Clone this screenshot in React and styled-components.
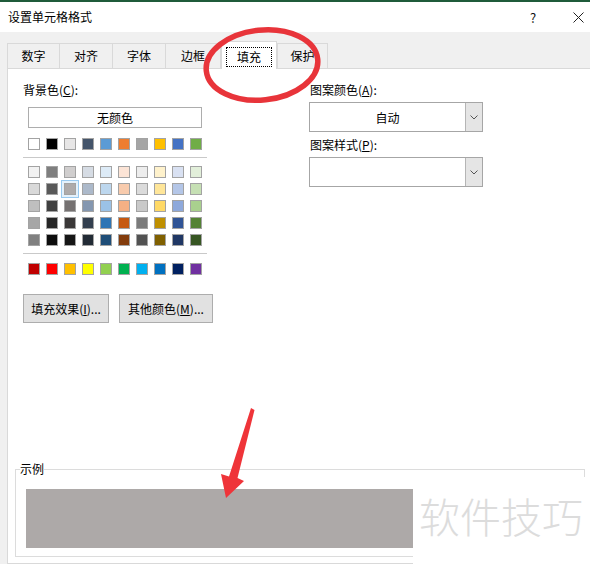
import React from 'react';
import styled, { createGlobalStyle } from 'styled-components';

const FONT = `"Noto Sans CJK SC", "Noto Sans", sans-serif`;

const GlobalStyle = createGlobalStyle`
  html, body { margin: 0; padding: 0; background: #f0f0f0; }
  body { font-family: ${FONT}; }
`;

const Window = styled.div`
  position: relative;
  width: 590px;
  height: 564px;
  overflow: hidden;
  background: #f0f0f0;
  display: flex;
  flex-direction: column;
  font-family: ${FONT};
  font-size: 12px;
  color: #000;
`;

const TopStripe = styled.div`
  flex: none;
  height: 2px;
  background: #1f5b3a;
`;

const TitleBar = styled.div`
  flex: none;
  height: 30px;
  background: #fff;
  display: flex;
  align-items: center;
  padding-left: 8px;
`;

const Title = styled.div`
  flex: 1;
  font-size: 12px;
  line-height: 16px;
`;

const TitleButton = styled.div`
  width: 20px;
  height: 20px;
  display: flex;
  align-items: center;
  justify-content: center;
  margin-right: ${(p) => p.$mr}px;
  font-size: 13px;
  color: #111;
`;

const Body = styled.div`
  flex: 1;
  display: flex;
  flex-direction: column;
  padding-left: 7px;
`;

const TabRow = styled.div`
  flex: none;
  margin-top: 9px;
  height: 27px;
  display: flex;
  align-items: flex-end;
  position: relative;
  z-index: 1;
`;

const Tab = styled.div`
  box-sizing: border-box;
  width: ${(p) => p.$w}px;
  height: ${(p) => (p.$active ? 28 : 25)}px;
  margin-left: ${(p) => p.$ml}px;
  margin-bottom: ${(p) => (p.$active ? -1 : 0)}px;
  border: 1px solid #d9d9d9;
  border-bottom: none;
  background: ${(p) => (p.$active ? '#fff' : '#f0f0f0')};
  display: flex;
  align-items: center;
  justify-content: center;
  font-size: 12px;
  line-height: 16px;
  position: relative;
  z-index: ${(p) => (p.$active ? 2 : 0)};
`;

const FocusText = styled.span`
  display: flex;
  align-items: center;
  justify-content: center;
  width: 46px;
  height: 20px;
  box-sizing: border-box;
  border: 1px dotted #000;
  margin-top: 2px;
`;

const Panel = styled.div`
  flex: 1;
  background: #fff;
  border: 1px solid #d9d9d9;
  border-right: none;
  padding-top: 13px;
  display: flex;
  flex-direction: column;
`;

const TopRow = styled.div`
  display: flex;
  padding-left: 15px;
`;

const LeftCol = styled.div`
  width: 286px;
  display: flex;
  flex-direction: column;
  align-items: flex-start;
`;

const RightCol = styled.div`
  width: 174px;
  display: flex;
  flex-direction: column;
`;

const Label = styled.div`
  font-size: 12px;
  line-height: 16px;
  margin-top: ${(p) => p.$mt || 0}px;
  padding-left: ${(p) => p.$pl || 0}px;
  u { text-underline-offset: 1px; }
`;

const NoColorButton = styled.div`
  box-sizing: border-box;
  margin: 9px 0 0 5px;
  width: 174px;
  height: 21px;
  border: 1px solid #adadad;
  background: #fff;
  display: flex;
  align-items: center;
  justify-content: center;
  font-size: 12px;
`;

const SwatchGrid = styled.div`
  display: grid;
  grid-template-columns: repeat(10, 12px);
  column-gap: 6px;
  row-gap: 5px;
  margin: ${(p) => p.$mt}px 0 0 5px;
`;

const Swatch = styled.div`
  box-sizing: border-box;
  width: 12px;
  height: 12px;
  border: 1px solid #a3a3a3;
  background: ${(p) => p.$c};
  box-shadow: ${(p) => (p.$selected ? '0 0 0 2px #e5f1fb, 0 0 0 3px #99c9ef' : 'none')};
`;

const Separator = styled.div`
  width: 184px;
  height: 1px;
  background: #c9c9c9;
  margin-top: 7px;
`;

const ButtonRow = styled.div`
  display: flex;
  gap: 10px;
  margin-top: 19px;
`;

const PushButton = styled.div`
  box-sizing: border-box;
  width: ${(p) => p.$w}px;
  height: 29px;
  border: 1px solid #adadad;
  background: #e1e1e1;
  display: flex;
  align-items: center;
  justify-content: center;
  font-size: 12px;
  u { text-underline-offset: 1px; }
`;

const Combo = styled.div`
  box-sizing: border-box;
  margin-top: 4px;
  width: 174px;
  height: 30px;
  border: 1px solid #a6a6a6;
  background: #fff;
  display: flex;
`;

const ComboValue = styled.div`
  flex: 1;
  display: flex;
  align-items: center;
  justify-content: center;
  font-size: 12px;
`;

const ComboArrow = styled.div`
  width: 16px;
  background: #e5e5e5;
  border-left: 1px solid #b5b5b5;
  display: flex;
  align-items: center;
  justify-content: center;
`;

const SampleGroup = styled.fieldset`
  box-sizing: border-box;
  width: 570px;
  margin: 139px 0 0 7px;
  padding: 13px 0 8px 4px;
  border: 1px solid #dcdcdc;
  min-inline-size: 0;
`;

const SampleLegend = styled.legend`
  padding: 0;
  margin: 0;
  font-size: 12px;
  line-height: 14px;
`;

const SampleFill = styled.div`
  width: 387px;
  height: 59px;
  margin-left: 6px;
  background: ${(p) => p.$c};
`;

const Watermark = styled.div`
  position: absolute;
  left: 413px;
  top: 477px;
  width: 177px;
  height: 87px;
  background: #fff;
  box-sizing: border-box;
  padding: 18px 0 0 6px;
  font-size: 41px;
  line-height: 41px;
  font-weight: 300;
  color: #dcdcdc;
  white-space: nowrap;
  z-index: 3;
`;

const Annotation = styled.svg`
  position: absolute;
  left: 0;
  top: 0;
  pointer-events: none;
  z-index: 10;
`;

const themeRow = ['#FFFFFF', '#000000', '#E7E6E6', '#44546A', '#5B9BD5', '#ED7D31', '#A5A5A5', '#FFC000', '#4472C4', '#70AD47'];
const tints = [
  ['#F2F2F2', '#7F7F7F', '#D0CECE', '#D6DCE4', '#DDEBF7', '#FCE4D6', '#EDEDED', '#FFF2CC', '#D9E1F2', '#E2EFDA'],
  ['#D9D9D9', '#595959', '#AEAAAA', '#ACB9CA', '#BDD7EE', '#F8CBAD', '#DBDBDB', '#FFE699', '#B4C6E7', '#C6E0B4'],
  ['#BFBFBF', '#404040', '#757171', '#8497B0', '#9BC2E6', '#F4B084', '#C9C9C9', '#FFD966', '#8EA9DB', '#A9D08E'],
  ['#A6A6A6', '#262626', '#3A3838', '#333F4F', '#2F75B5', '#C65911', '#7B7B7B', '#BF8F00', '#305496', '#548235'],
  ['#808080', '#0D0D0D', '#161616', '#222B35', '#1F4E78', '#833C0C', '#525252', '#806000', '#203764', '#375623'],
];
const standard = ['#C00000', '#FF0000', '#FFC000', '#FFFF00', '#92D050', '#00B050', '#00B0F0', '#0070C0', '#002060', '#7030A0'];

const tabs = [
  { t: '数字', w: 53, ml: 0 },
  { t: '对齐', w: 54, ml: -1 },
  { t: '字体', w: 54, ml: -1 },
  { t: '边框', w: 56, ml: -1 },
  { t: '填充', w: 56, ml: 0, active: true },
  { t: '保护', w: 51, ml: 0 },
];

const Chevron = () => (
  <svg width="8" height="5" viewBox="0 0 8 5">
    <path d="M0.5 0.5 L4 4 L7.5 0.5" fill="none" stroke="#555" strokeWidth="1" />
  </svg>
);

export default function App() {
  return (
    <>
      <GlobalStyle />
      <Window>
        <TopStripe />
        <TitleBar>
          <Title>设置单元格格式</Title>
          <TitleButton $mr={25}>?</TitleButton>
          <TitleButton $mr={2}>
            <svg width="11" height="11" viewBox="0 0 11 11">
              <path d="M0.5 0.5 L10.5 10.5 M10.5 0.5 L0.5 10.5" stroke="#222" strokeWidth="1" />
            </svg>
          </TitleButton>
        </TitleBar>
        <Body>
          <TabRow>
            {tabs.map((tb) => (
              <Tab key={tb.t} $w={tb.w} $ml={tb.ml} $active={tb.active}>
                {tb.active ? <FocusText>{tb.t}</FocusText> : tb.t}
              </Tab>
            ))}
          </TabRow>
          <Panel>
            <TopRow>
              <LeftCol>
                <Label>背景色(<u>C</u>):</Label>
                <NoColorButton>无颜色</NoColorButton>
                <SwatchGrid $mt={10}>
                  {themeRow.map((c, i) => <Swatch key={i} $c={c} />)}
                </SwatchGrid>
                <Separator />
                <SwatchGrid $mt={8}>
                  {tints.flatMap((row, r) =>
                    row.map((c, i) => <Swatch key={`${r}-${i}`} $c={c} $selected={r === 1 && i === 2} />)
                  )}
                </SwatchGrid>
                <Separator />
                <SwatchGrid $mt={9}>
                  {standard.map((c, i) => <Swatch key={i} $c={c} />)}
                </SwatchGrid>
                <ButtonRow>
                  <PushButton $w={86}>填充效果(<u>I</u>)...</PushButton>
                  <PushButton $w={94}>其他颜色(<u>M</u>)...</PushButton>
                </ButtonRow>
              </LeftCol>
              <RightCol>
                <Label $pl={1}>图案颜色(<u>A</u>):</Label>
                <Combo>
                  <ComboValue>自动</ComboValue>
                  <ComboArrow><Chevron /></ComboArrow>
                </Combo>
                <Label $pl={1} $mt={5}>图案样式(<u>P</u>):</Label>
                <Combo>
                  <ComboValue />
                  <ComboArrow><Chevron /></ComboArrow>
                </Combo>
              </RightCol>
            </TopRow>
            <SampleGroup>
              <SampleLegend>示例</SampleLegend>
              <SampleFill $c="#ADA9A8" />
            </SampleGroup>
          </Panel>
        </Body>
        <Watermark>软件技巧</Watermark>
        <Annotation width="590" height="564" viewBox="0 0 590 564">
          <ellipse cx="262" cy="65" rx="56" ry="35" fill="none" stroke="#e8343a" strokeWidth="5.5" transform="rotate(-6 262 65)" />
          <path d="M251 408 L254.5 410 L237.5 478 L244 481 L226 498 L221 474 L229 476.5 Z" fill="#ef3439" />
        </Annotation>
      </Window>
    </>
  );
}
